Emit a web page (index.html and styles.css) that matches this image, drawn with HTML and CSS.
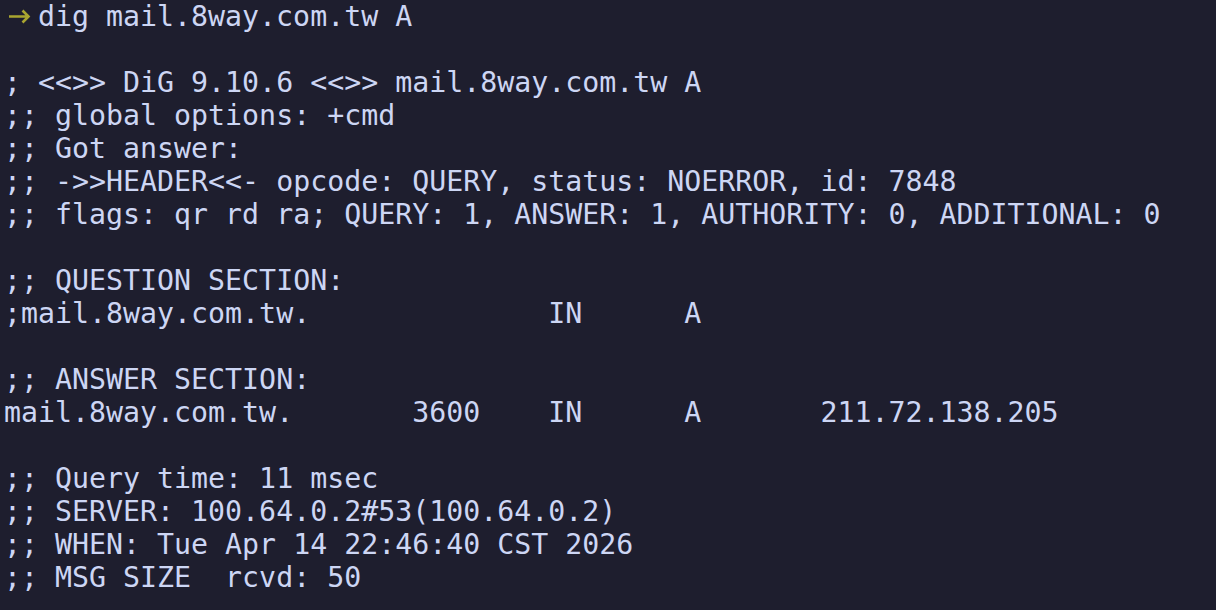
FILE: index.html
```html
<!DOCTYPE html>
<html>
<head>
<meta charset="utf-8">
<link rel="stylesheet" href="styles.css">
</head>
<body>
<pre class="term"><svg class="prompt" width="34" height="33" viewBox="0 0 34 33"><path d="M5 16.5H24.5M18.5 10.5L24.5 16.5L18.5 22.5" fill="none" stroke="#a9a530" stroke-width="2.6" stroke-linecap="butt" stroke-linejoin="miter"/></svg>dig mail.8way.com.tw A

; &lt;&lt;&gt;&gt; DiG 9.10.6 &lt;&lt;&gt;&gt; mail.8way.com.tw A
;; global options: +cmd
;; Got answer:
;; -&gt;&gt;HEADER&lt;&lt;- opcode: QUERY, status: NOERROR, id: 7848
;; flags: qr rd ra; QUERY: 1, ANSWER: 1, AUTHORITY: 0, ADDITIONAL: 0

;; QUESTION SECTION:
;mail.8way.com.tw.              IN      A

;; ANSWER SECTION:
mail.8way.com.tw.       3600    IN      A       211.72.138.205

;; Query time: 11 msec
;; SERVER: 100.64.0.2#53(100.64.0.2)
;; WHEN: Tue Apr 14 22:46:40 CST 2026
;; MSG SIZE  rcvd: 50
</pre>
</body>
</html>
```
FILE: styles.css
```css
html, body {
  margin: 0;
  padding: 0;
  background: #1e1e2e;
  height: 100%;
  overflow: hidden;
}
.term {
  margin: 0;
  padding: 0 0 0 4px;
  font-family: "DejaVu Sans Mono", monospace;
  font-size: 28.25px;
  line-height: 33px;
  color: #cdd6f4;
  white-space: pre;
}
.prompt {
  display: inline-block;
  vertical-align: top;
}
```
